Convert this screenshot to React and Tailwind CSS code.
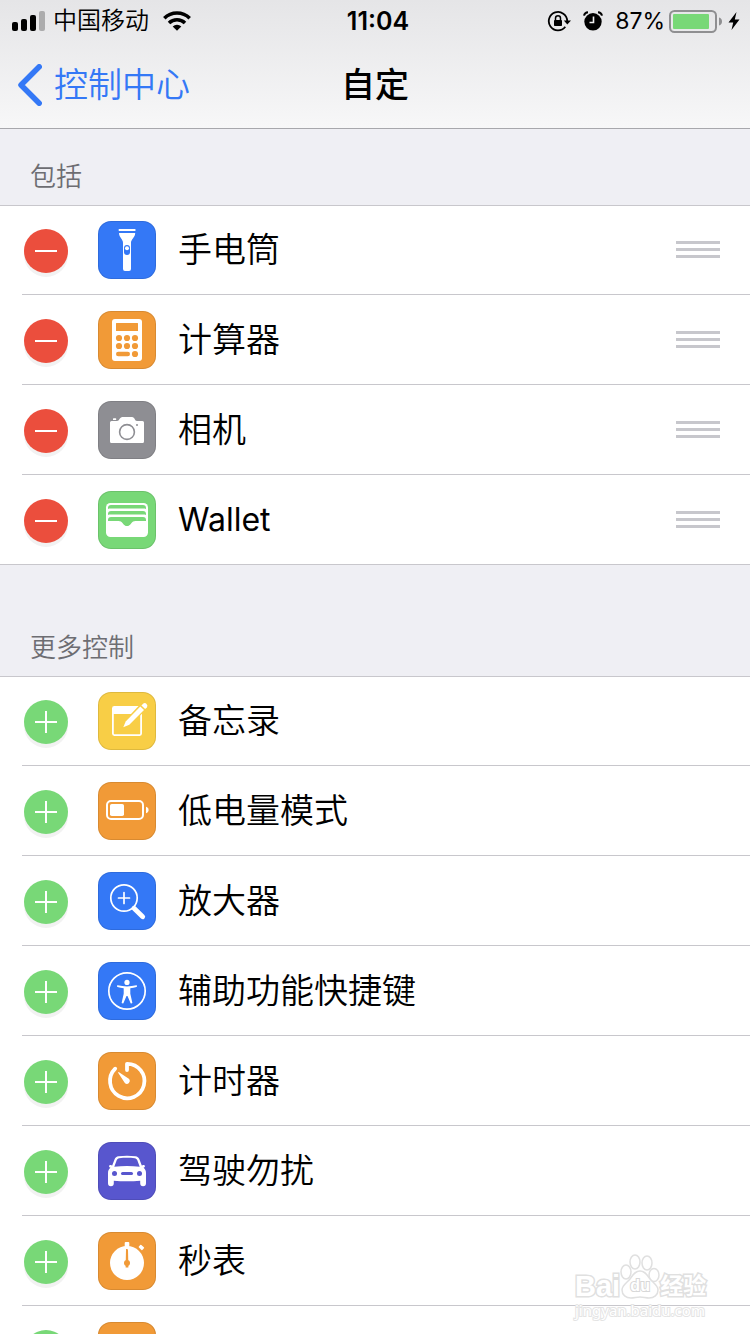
import React from 'react'

const INCLUDED = [
  { id: 'flashlight', label: '手电筒', color: 'bg-[#3478f6]', Icon: FlashlightIcon },
  { id: 'calculator', label: '计算器', color: 'bg-[#f19a37]', Icon: CalculatorIcon },
  { id: 'camera', label: '相机', color: 'bg-[#8e8e93]', Icon: CameraIcon },
  { id: 'wallet', label: 'Wallet', latin: true, color: 'bg-[#78d877]', Icon: WalletIcon },
]

const MORE = [
  { id: 'notes', label: '备忘录', color: 'bg-[#f8ce46]', Icon: NotesIcon },
  { id: 'lowpower', label: '低电量模式', color: 'bg-[#f19a37]', Icon: LowPowerIcon },
  { id: 'magnifier', label: '放大器', color: 'bg-[#3478f6]', Icon: MagnifierIcon },
  { id: 'accessibility', label: '辅助功能快捷键', color: 'bg-[#3478f6]', Icon: AccessibilityIcon },
  { id: 'timer', label: '计时器', color: 'bg-[#f19a37]', Icon: TimerIcon },
  { id: 'driving', label: '驾驶勿扰', color: 'bg-[#5856ce]', Icon: CarIcon },
  { id: 'stopwatch', label: '秒表', color: 'bg-[#f19a37]', Icon: StopwatchIcon },
  { id: 'next', label: '', color: 'bg-[#f19a37]', Icon: Glyph },
]

function Glyph({ children }) {
  return (
    <svg viewBox="0 0 58 58" className="size-[58px]" fill="#fff" aria-hidden="true">
      {children}
    </svg>
  )
}

function FlashlightIcon() {
  return (
    <Glyph>
      <rect x="20.7" y="8" width="16.8" height="2" rx="0.6" />
      <path d="M21 12h16.2c0 4.500-4.200 6-4.200 10v26a2 2 0 0 1-2 2h-4a2 2 0 0 1-2-2V22c0-4-4-5.500-4-10Z" />
      <rect x="26" y="24" width="6" height="10" rx="3" fill="#3478f6" />
      <circle cx="29" cy="27.300" r="2" />
    </Glyph>
  )
}

function CalculatorIcon() {
  return (
    <Glyph>
      <rect x="14" y="8" width="30" height="42" rx="3" />
      <g fill="#f19a37">
        <rect x="18" y="12" width="22" height="8" rx="0.5" />
        <circle cx="21" cy="27" r="3.100" />
        <circle cx="29" cy="27" r="3.100" />
        <circle cx="37" cy="27" r="3.100" />
        <circle cx="21" cy="35" r="3.100" />
        <circle cx="29" cy="35" r="3.100" />
        <circle cx="37" cy="35" r="3.100" />
        <rect x="18" y="40.700" width="14" height="4.600" rx="2.300" />
        <circle cx="37" cy="43" r="3.100" />
      </g>
    </Glyph>
  )
}

function CameraIcon() {
  return (
    <Glyph>
      <path d="M13.500 20H19c2.500 0 2.500-4 5.500-4h9.500c3 0 2.500 4 5 4h5.500a1.500 1.500 0 0 1 1.500 1.500v19a1.500 1.500 0 0 1-1.500 1.500h-31a1.500 1.500 0 0 1-1.500-1.500v-19a1.500 1.500 0 0 1 1.500-1.500Z" />
      <rect x="15" y="17.300" width="3.200" height="1.700" rx="0.600" />
      <circle cx="29" cy="31" r="7.400" fill="none" stroke="#8e8e93" strokeWidth="1.600" />
      <circle cx="39" cy="24" r="1" fill="#8e8e93" />
    </Glyph>
  )
}

function WalletIcon() {
  return (
    <Glyph>
      <rect x="8" y="12" width="42" height="34" rx="4.500" />
      <g fill="#78d877">
        <path d="M10 18v-1a3 3 0 0 1 3-3h32a3 3 0 0 1 3 3v1c-.8-.4-1.500-.5-3-.5H13c-1.500 0-2.200.1-3 .5Z" />
        <path d="M10 24v-1a3 3 0 0 1 3-3h32a3 3 0 0 1 3 3v1c-.8-.4-1.500-.5-3-.5H13c-1.500 0-2.200.1-3 .5Z" />
        <path d="M10 30v-1a3 3 0 0 1 3-3h32a3 3 0 0 1 3 3v1H37.500c-2 0-3 .7-4.200 2.200-1.300 1.700-2.500 2.900-4.300 2.900s-3-1.200-4.300-2.900C23.500 30.700 22.500 30 20.500 30Z" />
      </g>
    </Glyph>
  )
}

function NotesIcon() {
  return (
    <Glyph>
      <rect x="14.900" y="14.900" width="28.200" height="28.200" rx="1.500" fill="none" stroke="#fff" strokeWidth="1.800" />
      <path d="M15 15h28v7H15Z" />
      <path d="m23.500 37 3.300-8.500L41.500 13l8 3L32 34Z" fill="#f8ce46" />
      <path d="m25.300 35.200 2.400-5.700 14.600-14.900 3.700 3.500-14.700 14.600Z" />
      <path d="m43.400 13.500 1.700-1.700a2.600 2.600 0 0 1 3.700 3.600l-1.700 1.700Z" />
    </Glyph>
  )
}

function LowPowerIcon() {
  return (
    <Glyph>
      <rect x="9" y="19" width="36" height="18" rx="4" fill="none" stroke="#fff" strokeWidth="2" />
      <rect x="12" y="22" width="14" height="12" rx="1.800" />
      <path d="M48 24.800c1.700.4 2.600 1.600 2.600 3.200s-.9 2.800-2.600 3.200Z" />
    </Glyph>
  )
}

function MagnifierIcon() {
  return (
    <Glyph>
      <g fill="none" stroke="#fff" strokeLinecap="round">
        <circle cx="26" cy="26" r="13.200" strokeWidth="1.700" />
        <path d="M26 20.500v11M20.500 26h11" strokeWidth="1.700" />
        <path d="m36 36.200 8.700 8.500" strokeWidth="4.800" />
      </g>
    </Glyph>
  )
}

function AccessibilityIcon() {
  return (
    <Glyph>
      <circle cx="29" cy="29" r="18.200" fill="none" stroke="#fff" strokeWidth="1.700" />
      <circle cx="29" cy="20.400" r="2.600" />
      <path d="M19.700 23.300c3 .7 6 1.100 9.300 1.100s6.300-.4 9.300-1.100c1 0 1 1.300.2 1.600-2 .7-4 1.100-6.200 1.400v5.500l2 8.700c.1 1-1.400 1.300-1.800.4L29.500 34h-1l-3 6.900c-.4.900-1.900.6-1.800-.4l2-8.700v-5.500c-2.200-.3-4.200-.7-6.200-1.400-.8-.3-.8-1.600.2-1.600Z" />
    </Glyph>
  )
}

function TimerIcon() {
  return (
    <Glyph>
      <path d="M17.200 16.700A17.200 17.200 0 1 0 29 11.800V18" fill="none" stroke="#fff" strokeWidth="3.800" strokeLinecap="round" strokeLinejoin="round" />
      <path d="M20.300 20.200c.2-.2.500-.1.700 0l10.200 6.900a3 3 0 0 1-4.200 4.200l-6.700-10.400c-.2-.2-.2-.5 0-.7Z" />
    </Glyph>
  )
}

function CarIcon() {
  return (
    <Glyph>
      <path
        fillRule="evenodd"
        d="M20.500 14.300c5.500-.7 11.500-.7 17 0 1.800.2 3.200 1.200 3.900 3l2.400 6.300 1.600-.5c1.500-.4 2.200 1.600.8 2.300l-.7.400c1.700 1.200 2.500 2.900 2.500 5.200v10.300a2.900 2.900 0 0 1-5.800 0v-2.600c-8.500.8-17.900.8-26.400 0v2.600a2.900 2.900 0 0 1-5.800 0V31c0-2.300.8-4 2.500-5.200l-.7-.4c-1.400-.7-.7-2.700.8-2.300l1.600.5 2.400-6.300c.7-1.800 2.100-2.800 3.900-3Zm.7 2c-1.300.2-2 .8-2.500 2l-2.400 6.500c8.300-1.100 17.100-1.100 25.400 0l-2.400-6.500c-.5-1.200-1.200-1.800-2.500-2-5-.6-10.600-.6-15.600 0Z"
      />
      <g fill="#5856ce">
        <circle cx="16.500" cy="31.500" r="2.500" />
        <circle cx="41.500" cy="31.500" r="2.500" />
        <rect x="23" y="30" width="12" height="3" rx="1.500" />
      </g>
    </Glyph>
  )
}

function StopwatchIcon() {
  return (
    <Glyph>
      <circle cx="29" cy="31" r="17" />
      <rect x="26.700" y="10" width="4.600" height="6" rx="1" />
      <rect x="40.900" y="13.600" width="5" height="3.600" rx="0.800" transform="rotate(42 43.400 15.400)" />
      <g fill="#f19a37">
        <path d="M28 17.500c0-1 2 0 2 0l.4 18h-2.800Z" />
        <circle cx="29" cy="31" r="3" />
      </g>
    </Glyph>
  )
}

function StatusBar() {
  return (
    <div className="grid h-10 grid-cols-[1fr_auto_1fr] items-center pl-3 pr-2.5 pt-0.5">
      <div className="flex items-center gap-2">
        <svg viewBox="0 0 33 20" className="h-5 w-[33px]" aria-hidden="true">
          <rect x="0" y="11" width="6" height="9" rx="2" />
          <rect x="9" y="8" width="6" height="12" rx="2" />
          <rect x="18" y="4" width="6" height="16" rx="2" />
          <rect x="27" y="0" width="6" height="20" rx="2" fill="#acacad" />
        </svg>
        <span className="text-2xl font-[350] leading-8">中国移动</span>
        <svg viewBox="0 0 28 20" className="ml-1.5 h-5 w-7" fill="none" stroke="#000" strokeWidth="3.600" aria-hidden="true">
          <path d="M1.300 7.200a18.200 18.200 0 0 1 25.400 0" />
          <path d="M6 12a11.600 11.600 0 0 1 16 0" />
          <path d="M14 19.800 9.700 15.500a6.300 6.300 0 0 1 8.600 0Z" fill="#000" stroke="none" />
        </svg>
      </div>
      <span className="pl-1 text-[25px] font-semibold leading-8">11:04</span>
      <div className="flex items-center justify-end">
        <svg viewBox="0 0 24 22" className="mr-3 h-[22px] w-6" aria-hidden="true">
          <path d="M18.300 16.800A9.200 9.200 0 1 1 20.200 11" fill="none" stroke="#000" strokeWidth="1.800" />
          <path d="M16.800 10.500H24L20.300 14.500Z" />
          <rect x="7" y="10" width="8" height="6" rx="0.800" />
          <path d="M8.500 10.500V8.300a2.500 2.500 0 0 1 5 0v2.200" fill="none" stroke="#000" strokeWidth="1.500" />
        </svg>
        <svg viewBox="0 0 20 20" className="mr-3 size-5" aria-hidden="true">
          <circle cx="10" cy="10.800" r="8.700" />
          <path d="M10.500 5.500v6H6.500" fill="none" stroke="#f0f0f1" strokeWidth="1.600" />
          <path d="M1 4.600C1.400 2.600 3 1.300 5 1.200M19 4.600c-.4-2-2-3.300-4-3.400" fill="none" stroke="#000" strokeWidth="2" />
        </svg>
        <span className="mr-1 text-[23px] leading-8">87%</span>
        <svg viewBox="0 0 53 23" className="mr-1.5 h-[23px] w-[53px]" aria-hidden="true">
          <rect x="1" y="1" width="46" height="21" rx="4.500" fill="none" stroke="#8f8f91" strokeWidth="2" />
          <rect x="4" y="4" width="36" height="15" rx="1" fill="#78d877" />
          <path d="M50 7.500c2 .6 3 2 3 4s-1 3.400-3 4Z" fill="#8f8f91" />
        </svg>
        <svg viewBox="0 0 12 18" className="h-[18px] w-3" aria-hidden="true">
          <path d="M8.500 0 .5 10.500h4.700L3.500 18 11.500 7.500H6.800Z" />
        </svg>
      </div>
    </div>
  )
}

function NavBar() {
  return (
    <nav className="grid h-[88px] grid-cols-[1fr_auto_1fr] items-center px-[18px] pt-0.5">
      <a href="#control-center" className="flex items-center gap-3 text-[#3478f6]">
        <svg viewBox="0 0 24 42" className="h-[42px] w-6" fill="none" stroke="currentColor" strokeWidth="5.500" strokeLinecap="round" strokeLinejoin="round" aria-hidden="true">
          <path d="M21.200 2.800 3 21l18.200 18.200" />
        </svg>
        <span className="text-[34px] font-[350] leading-10">控制中心</span>
      </a>
      <h1 className="text-[34px] font-medium leading-10">自定</h1>
    </nav>
  )
}

function ControlRow({ item, included, last }) {
  const { label, latin, color, Icon } = item
  return (
    <li className={`ml-[22px] flex h-[90px] items-center border-b pl-0.5 pr-[30px] ${last ? 'border-transparent' : 'border-[#c8c7cc]'}`}>
      <button
        type="button"
        aria-label={`${included ? '移除' : '添加'} ${label}`}
        className={`mt-0.5 flex size-11 shrink-0 items-center justify-center rounded-full shadow-[0_4px_0_#f2f2f2] ${included ? 'bg-[#eb4e3d]' : 'bg-[#78d877]'}`}
      >
        <svg viewBox="0 0 22 22" className="size-[22px]" stroke="#fff" strokeWidth="2" aria-hidden="true">
          <path d={included ? 'M0 11h22' : 'M0 11h22M11 0v22'} />
        </svg>
      </button>
      <span className={`ml-[30px] shrink-0 overflow-hidden rounded-[13px] ring-1 ring-inset ring-black/10 ${color}`}>
        <Icon />
      </span>
      <span className={`ml-[22px] flex-1 leading-10 ${latin ? 'text-[32px]' : 'text-[34px] font-[350]'}`}>{label}</span>
      {included && (
        <button type="button" aria-label={`移动 ${label}`} className="flex w-11 flex-col gap-1">
          <span className="h-[3px] bg-[#c7c7cc]" />
          <span className="h-[3px] bg-[#c7c7cc]" />
          <span className="h-[3px] bg-[#c7c7cc]" />
        </button>
      )}
    </li>
  )
}

function ControlList({ items, included }) {
  return (
    <ul className="bg-white shadow-[inset_0_1px_0_#c8c7cc,inset_0_-1px_0_#c8c7cc]">
      {items.map((item, i) => (
        <ControlRow key={item.id} item={item} included={included} last={i === items.length - 1} />
      ))}
    </ul>
  )
}

function Watermark() {
  return (
    <div className="pointer-events-none absolute bottom-4 right-10 w-[135px] font-['Liberation_Sans','Noto_Sans_CJK_SC',sans-serif] text-white [paint-order:stroke_fill]">
      <div className="flex items-end font-bold [-webkit-text-stroke:3px_#e0e0e0]">
        <span className="text-[29px] leading-8">Bai</span>
        <span className="relative flex h-12 w-10 items-end justify-center pb-1">
          <svg viewBox="0 0 40 46" className="absolute inset-0 h-[46px] w-10 [paint-order:normal]" fill="#fff" stroke="#e0e0e0" strokeWidth="1.500" aria-hidden="true">
            <ellipse cx="6" cy="18" rx="5" ry="7" />
            <ellipse cx="15" cy="8" rx="5" ry="7" />
            <ellipse cx="27" cy="9" rx="5" ry="7" />
            <ellipse cx="34" cy="21" rx="5" ry="6.500" />
            <path d="M20 17c5 0 7 4 10 8s8 6 8 11-4 8-9 8c-3 0-6-1-9-1s-6 1-9 1c-5 0-9-3-9-8s5-7 8-11 5-8 10-8Z" />
          </svg>
          <span className="relative text-base leading-6 [-webkit-text-stroke:2px_#d8d8d8]">du</span>
        </span>
        <span className="text-[23px] leading-8">经验</span>
      </div>
      <div className="font-['Noto_Sans'] text-[15px] leading-4 [-webkit-text-stroke:2px_#e4e4e4]">jingyan.baidu.com</div>
    </div>
  )
}

export default function App() {
  return (
    <div
      lang="zh-CN"
      className="relative h-screen overflow-hidden bg-[#efeff4] font-['Inter','Noto_Sans_CJK_SC',sans-serif] text-black"
    >
      <header className="border-b border-[#a7a7ac] bg-linear-to-b from-[#e5e5e7] to-[#f7f7f8]">
        <StatusBar />
        <NavBar />
      </header>
      <main>
        <section>
          <h2 className="px-[30px] pb-2.5 pt-[30px] text-[26px] font-[350] leading-9 text-[#6d6d72]">包括</h2>
          <ControlList items={INCLUDED} included />
        </section>
        <section>
          <h2 className="px-[30px] pb-2.5 pt-[65px] text-[26px] font-[350] leading-9 text-[#6d6d72]">更多控制</h2>
          <ControlList items={MORE} />
        </section>
      </main>
      <Watermark />
    </div>
  )
}
